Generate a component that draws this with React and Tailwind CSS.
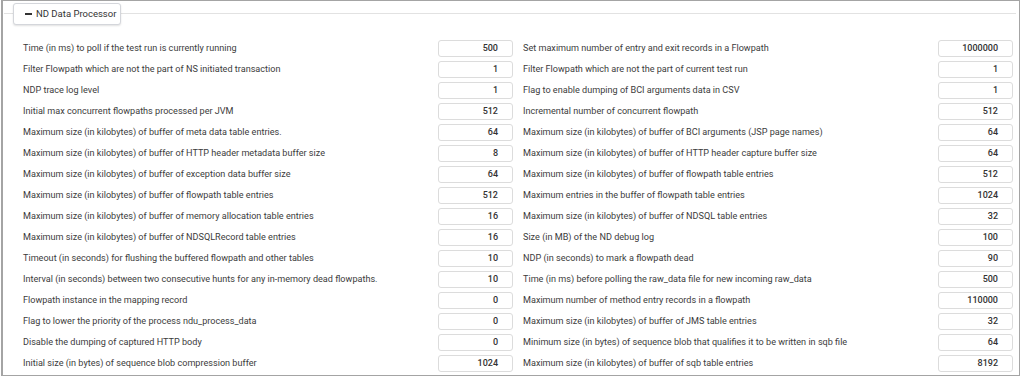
import React from 'react';

const rows = [
    ['Time (in ms) to poll if the test run is currently running', '500', 'Set maximum number of entry and exit records in a Flowpath', '1000000'],
    ['Filter Flowpath which are not the part of NS initiated transaction', '1', 'Filter Flowpath which are not the part of current test run', '1'],
    ['NDP trace log level', '1', 'Flag to enable dumping of BCI arguments data in CSV', '1'],
    ['Initial max concurrent flowpaths processed per JVM', '512', 'Incremental number of concurrent flowpath', '512'],
    ['Maximum size (in kilobytes) of buffer of meta data table entries.', '64', 'Maximum size (in kilobytes) of buffer of BCI arguments (JSP page names)', '64'],
    ['Maximum size (in kilobytes) of buffer of HTTP header metadata buffer size', '8', 'Maximum size (in kilobytes) of buffer of HTTP header capture buffer size', '64'],
    ['Maximum size (in kilobytes) of buffer of exception data buffer size', '64', 'Maximum size (in kilobytes) of buffer of flowpath table entries', '512'],
    ['Maximum size (in kilobytes) of buffer of flowpath table entries', '512', 'Maximum entries in the buffer of flowpath table entries', '1024'],
    ['Maximum size (in kilobytes) of buffer of memory allocation table entries', '16', 'Maximum size (in kilobytes) of buffer of NDSQL table entries', '32'],
    ['Maximum size (in kilobytes) of buffer of NDSQLRecord table entries', '16', 'Size (in MB) of the ND debug log', '100'],
    ['Timeout (in seconds) for flushing the buffered flowpath and other tables', '10', 'NDP (in seconds) to mark a flowpath dead', '90'],
    ['Interval (in seconds) between two consecutive hunts for any in-memory dead flowpaths.', '10', 'Time (in ms) before polling the raw_data file for new incoming raw_data', '500'],
    ['Flowpath instance in the mapping record', '0', 'Maximum number of method entry records in a flowpath', '110000'],
    ['Flag to lower the priority of the process ndu_process_data', '0', 'Maximum size (in kilobytes) of buffer of JMS table entries', '32'],
    ['Disable the dumping of captured HTTP body', '0', 'Minimum size (in bytes) of sequence blob that qualifies it to be written in sqb file', '64'],
    ['Initial size (in bytes) of sequence blob compression buffer', '1024', 'Maximum size (in kilobytes) of buffer of sqb table entries', '8192'],
    ['', '', '', ''],
];

const Field = ({ label, value }) => (
    <div className="flex items-center justify-between h-[21px]">
        <span className="text-[9.1px] text-[#3c3c3c] whitespace-nowrap">{label}</span>
        <div className="w-[75px] h-[17px] border border-[#dcdcdc] rounded-[3px] bg-white flex items-center justify-end pr-[14px] text-[9px] text-[#333] font-medium">
            {value}
        </div>
    </div>
);

const App = () => {
    return (
        <div className="w-[1024px] h-[378px] bg-white font-['Roboto',_sans-serif]">
            <div className="ml-[1px] w-[1019px] h-[376px] border border-l-2 border-[#a4a4a4] overflow-hidden relative">
                {/* fieldset line */}
                <div className="absolute left-[1px] right-[3px] top-[12px] border-t border-[#e2e2e2]" />

                <div className="relative h-[37px] pt-[2px] pl-[10px]">
                    <div className="w-[108px] h-[22px] border border-[#d4d6db] rounded-[3px] bg-white shadow-[0_1px_2px_rgba(0,0,0,0.12)] flex items-center pl-[11px] gap-[4px] text-[9.5px] text-[#333]">
                        <span className="w-[7px] h-[1.5px] bg-[#333]" />
                        <span>ND Data Processor</span>
                    </div>
                </div>

                <div className="grid grid-cols-2 gap-x-[10px] pl-[20px] pr-[6px]">
                    {rows.map((r, i) => (
                        <React.Fragment key={i}>
                            <Field label={r[0]} value={r[1]} />
                            <Field label={r[2]} value={r[3]} />
                        </React.Fragment>
                    ))}
                </div>
            </div>
        </div>
    );
};

export default App;
